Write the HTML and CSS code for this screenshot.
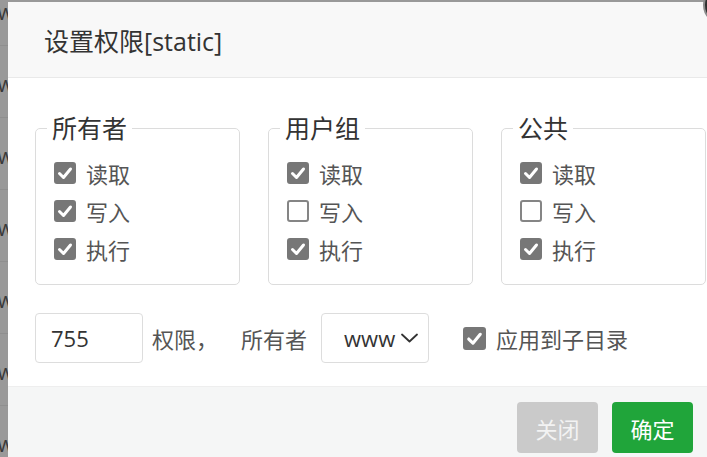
FILE: index.html
```html
<!DOCTYPE html>
<html lang="zh-CN">
<head>
<meta charset="utf-8">
<title>设置权限</title>
<link rel="stylesheet" href="styles.css">
</head>
<body>
<div class="page">
  <div class="bg-row bg-first"><span class="bg-w">www</span><span class="bg-status">正常</span><span class="bg-date">2020/08/06 16:16:15</span></div>
  <div class="bg-row"><span class="bg-w">www</span></div>
  <div class="bg-row"><span class="bg-w">www</span></div>
  <div class="bg-row"><span class="bg-w">www</span></div>
  <div class="bg-row"><span class="bg-w">www</span></div>
  <div class="bg-row"><span class="bg-w">www</span></div>
  <div class="bg-row"><span class="bg-w">www</span></div>
</div>

<div class="dialog">
  <div class="dlg-head">设置权限[static]</div>
  <div class="dlg-body">
    <div class="groups">
      <fieldset class="group">
        <legend>所有者</legend>
        <label class="chk"><span class="box on"><svg viewBox="0 0 22 22"><polyline points="5.5,11.5 9.5,15.5 16.5,7"/></svg></span>读取</label>
        <label class="chk"><span class="box on"><svg viewBox="0 0 22 22"><polyline points="5.5,11.5 9.5,15.5 16.5,7"/></svg></span>写入</label>
        <label class="chk"><span class="box on"><svg viewBox="0 0 22 22"><polyline points="5.5,11.5 9.5,15.5 16.5,7"/></svg></span>执行</label>
      </fieldset>
      <fieldset class="group">
        <legend>用户组</legend>
        <label class="chk"><span class="box on"><svg viewBox="0 0 22 22"><polyline points="5.5,11.5 9.5,15.5 16.5,7"/></svg></span>读取</label>
        <label class="chk"><span class="box"></span>写入</label>
        <label class="chk"><span class="box on"><svg viewBox="0 0 22 22"><polyline points="5.5,11.5 9.5,15.5 16.5,7"/></svg></span>执行</label>
      </fieldset>
      <fieldset class="group">
        <legend>公共</legend>
        <label class="chk"><span class="box on"><svg viewBox="0 0 22 22"><polyline points="5.5,11.5 9.5,15.5 16.5,7"/></svg></span>读取</label>
        <label class="chk"><span class="box"></span>写入</label>
        <label class="chk"><span class="box on"><svg viewBox="0 0 22 22"><polyline points="5.5,11.5 9.5,15.5 16.5,7"/></svg></span>执行</label>
      </fieldset>
    </div>
    <div class="opts">
      <div class="field">755</div>
      <span class="txt txt-perm">权限，</span>
      <span class="txt txt-owner">所有者</span>
      <div class="select">www<svg class="chev" viewBox="0 0 17 10"><polyline points="1,1.5 8.5,8.5 16,1.5"/></svg></div>
      <label class="chk chk-sub"><span class="box on"><svg viewBox="0 0 22 22"><polyline points="5.5,11.5 9.5,15.5 16.5,7"/></svg></span>应用到子目录</label>
    </div>
  </div>
  <div class="dlg-foot">
    <button class="btn btn-close">关闭</button>
    <button class="btn btn-ok">确定</button>
  </div>
  <span class="close-x"></span>
</div>
</body>
</html>
```

FILE: styles.css
```css
* { box-sizing: border-box; }

html, body {
  margin: 0;
  padding: 0;
  width: 707px;
  height: 457px;
  overflow: hidden;
  background: #999999;
  font-family: "Open Sans", "Noto Sans CJK SC", sans-serif;
}

.page {
  margin-top: -26px;
}

.bg-row {
  height: 72px;
  border-bottom: 1px solid #8f8f8f;
  display: flex;
  align-items: center;
  font-size: 21px;
  color: #3a3a3a;
}

.bg-w {
  margin-left: -35px;
  width: 60px;
  padding-top: 4px;
}

.bg-first {
  align-items: flex-start;
}

.bg-first .bg-w {
  align-self: center;
}

.bg-status {
  margin-left: 132px;
  margin-top: 0;
  color: #1f6f2c;
  font-size: 20px;
}

.bg-date {
  margin-left: 123px;
  margin-top: 0;
  font-size: 20px;
  letter-spacing: 1px;
}

.dialog {
  position: absolute;
  left: 8px;
  top: 2px;
  width: 725px;
  background: #ffffff;
  border-radius: 2px;
}

.dlg-head {
  height: 76px;
  background: #f8f8f8;
  border-bottom: 1px solid #e9e9e9;
  display: flex;
  align-items: center;
  padding-left: 36px;
  padding-top: 1px;
  font-size: 25px;
  color: #333333;
}

.dlg-body {
  padding: 38px 27px 23px;
}

.groups {
  display: grid;
  grid-template-columns: repeat(3, 205px);
  column-gap: 28px;
}

.group {
  margin: 0;
  min-width: 0;
  border: 1px solid #dcdcdc;
  border-radius: 5px;
  padding: 13px 17px 16px 18px;
}

.group legend {
  margin-left: -7px;
  padding: 0 5px;
  font-size: 25px;
  line-height: 25px;
  color: #333333;
}

.chk {
  height: 38px;
  display: flex;
  align-items: center;
  gap: 10px;
  font-size: 22px;
  color: #555555;
}

.box {
  width: 22px;
  height: 22px;
  border-radius: 3px;
  border: 2px solid #858585;
  background: #ffffff;
  flex: none;
  display: flex;
}

.box.on {
  background: #777777;
  border-color: #777777;
}

.box svg {
  width: 22px;
  height: 22px;
  margin: -2px;
  fill: none;
  stroke: #ffffff;
  stroke-width: 3;
  stroke-linecap: round;
  stroke-linejoin: round;
}

.opts {
  margin-top: 28px;
  height: 50px;
  display: flex;
  align-items: center;
}

.field {
  width: 108px;
  height: 50px;
  border: 1px solid #dddddd;
  border-radius: 4px;
  display: flex;
  align-items: center;
  padding-left: 15px;
  font-size: 22px;
  color: #333333;
}

.txt {
  font-size: 22px;
  color: #555555;
}

.txt-perm {
  margin-left: 9px;
}

.txt-owner {
  margin-left: 23px;
}

.select {
  margin-left: 14px;
  width: 108px;
  height: 50px;
  border: 1px solid #dddddd;
  border-radius: 4px;
  display: flex;
  align-items: center;
  padding-left: 22px;
  font-size: 22px;
  color: #333333;
}

.chev {
  width: 17px;
  height: 10px;
  margin-left: 6px;
  fill: none;
  stroke: #333333;
  stroke-width: 1.8;
  stroke-linecap: round;
  stroke-linejoin: round;
}

.chk-sub {
  margin-left: 34px;
  height: 50px;
  color: #555555;
}

.chk-sub .box {
  width: 23px;
  height: 23px;
}

.chk-sub .box svg {
  width: 23px;
  height: 23px;
}

.dlg-foot {
  height: 90px;
  background: #f5f6f6;
  border-top: 1px solid #eeeeee;
  display: flex;
  justify-content: flex-end;
  align-items: flex-start;
  gap: 14px;
  padding: 15px 40px 0 0;
}

.btn {
  width: 81px;
  height: 51px;
  border: none;
  border-radius: 4px;
  font-family: "Open Sans", "Noto Sans CJK SC", sans-serif;
  font-size: 22px;
  padding: 0;
}

.btn-close {
  background: #cacaca;
  color: #f3f3f3;
}

.btn-ok {
  background: #20a53a;
  color: #ffffff;
}

.close-x {
  position: absolute;
  left: 695px;
  top: -17px;
  width: 40px;
  height: 40px;
  border-radius: 50%;
  background: #2f2f2f;
  border: 2px solid #8c8c8c;
}
```
